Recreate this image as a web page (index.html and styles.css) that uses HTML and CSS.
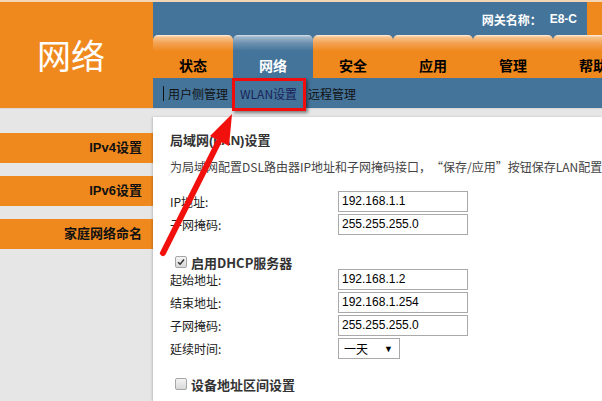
FILE: index.html
```html
<!DOCTYPE html>
<html lang="zh-CN">
<head>
<meta charset="utf-8">
<title>网络</title>
<link rel="stylesheet" href="styles.css">
</head>
<body>
<div class="page">
  <div class="topline"></div>
  <header class="header">
    <div class="logo">网络</div>
    <div class="navarea">
      <div class="gwbar">
        <span class="gw">网关名称：<b class="gwname">E8-C</b></span>
        <span class="gwcap"></span>
      </div>
      <nav class="tabs">
        <div class="tab">状态</div>
        <div class="tab active">网络</div>
        <div class="tab">安全</div>
        <div class="tab">应用</div>
        <div class="tab">管理</div>
        <div class="tab">帮助</div>
      </nav>
      <div class="subnav">
        <span class="sep"></span>
        <span class="sub">用户侧管理</span>
        <span class="sub current">WLAN设置</span>
        <span class="sub">远程管理</span>
      </div>
    </div>
  </header>
  <div class="body">
    <aside class="side">
      <div class="sideitem">IPv4设置</div>
      <div class="sideitem">IPv6设置</div>
      <div class="sideitem">家庭网络命名</div>
    </aside>
    <main class="panel">
      <div class="title">局域网(LAN)设置</div>
      <div class="desc">为局域网配置DSL路由器IP地址和子网掩码接口，<span class="q">“</span>保存/应用<span class="q">”</span>按钮保存LAN配置数据。</div>
      <div class="form first">
        <label class="lbl">IP地址:</label><div class="input">192.168.1.1</div>
        <label class="lbl">子网掩码:</label><div class="input">255.255.255.0</div>
      </div>
      <div class="check">
        <span class="box"><svg viewBox="0 0 12 12" width="12" height="12"><path d="M2.5 6.2 L5 8.6 L9.6 3" fill="none" stroke="#333" stroke-width="1.8"/></svg></span>
        <span class="checklbl">启用DHCP服务器</span>
      </div>
      <div class="form">
        <label class="lbl">起始地址:</label><div class="input">192.168.1.2</div>
        <label class="lbl">结束地址:</label><div class="input">192.168.1.254</div>
        <label class="lbl">子网掩码:</label><div class="input">255.255.255.0</div>
        <label class="lbl">延续时间:</label><div class="select"><span>一天</span><span class="caret">▼</span></div>
      </div>
      <div class="check second">
        <span class="box"></span>
        <span class="checklbl">设备地址区间设置</span>
      </div>
    </main>
  </div>
  <div class="redbox"></div>
  <svg class="arrow" viewBox="0 0 602 401" width="602" height="401">
    <line x1="163" y1="253" x2="219" y2="141" stroke="#f2100d" stroke-width="6" stroke-linecap="round"/>
    <polygon points="232,114 210,136 229,146" fill="#f2100d"/>
  </svg>
</div>
</body>
</html>
```
FILE: styles.css
```css
* { box-sizing: border-box; }
html, body { margin: 0; padding: 0; }
body {
  width: 602px;
  height: 401px;
  overflow: hidden;
  background: #e6e6e6;
  font-family: "Liberation Sans", "Noto Sans CJK SC", sans-serif;
  font-size: 12px;
  color: #111;
}
.page { position: relative; width: 602px; height: 401px; overflow: hidden; }
.topline { height: 2px; background: #f3d6b6; }
.header { display: flex; height: 106px; }
.logo {
  width: 153px;
  flex: none;
  background: #ef891e;
  color: #fff;
  font-family: "Noto Sans CJK SC", sans-serif;
  font-size: 34px;
  display: flex;
  align-items: center;
  justify-content: center;
  padding-right: 11px;
  padding-bottom: 2px;
}
.navarea { flex: 1; display: flex; flex-direction: column; background: #44749a; min-width: 0; }
.gwbar { height: 33px; display: flex; justify-content: flex-end; align-items: stretch; }
.gw {
  display: flex;
  align-items: center;
  color: #fff;
  font-weight: bold;
  font-size: 12px;
  font-family: "Noto Sans CJK SC", sans-serif;
  margin-right: 10px;
  padding-top: 1px;
}
.gwname { font-family: "Liberation Sans", sans-serif; font-size: 12px; margin-left: 8px; }
.gwcap { width: 15px; background: #ef891e; }
.tabs { height: 43px; display: flex; overflow: hidden; }
.tab {
  flex: none;
  width: 80px;
  border-radius: 5px 5px 0 0;
  background: linear-gradient(#fdf3ea 0, #f8c48e 2px, #f3a254 8px, #ef891e 16px, #ef891e 100%);
  text-align: center;
  font-family: "Noto Sans CJK SC", sans-serif;
  font-weight: bold;
  font-size: 14px;
  line-height: 20px;
  padding-top: 20px;
  color: #000;
}
.tab.active {
  background: linear-gradient(#d7e2ec 0, #9fb7cc 2px, #6d91b0 8px, #44749a 16px, #44749a 100%);
  color: #fff;
}
.subnav {
  height: 30px;
  display: flex;
  align-items: center;
  padding-left: 10px;
  font-family: "Noto Sans CJK SC", sans-serif;
  font-size: 12px;
  color: #111;
}
.sep { width: 1px; height: 15px; background: #111; margin-right: 4px; }
.sub { margin-right: 11px; }
.sub.current { color: #1a2358; margin-left: 1px; }
.body { display: flex; height: 293px; padding-top: 8px; background: #e6e6e6; border-top: 1px solid #d8d8d8; }
.side { width: 153px; flex: none; padding-top: 16px; }
.sideitem {
  height: 30px;
  margin-bottom: 13px;
  background: #ef891e;
  text-align: right;
  padding-right: 11px;
  line-height: 30px;
  font-weight: bold;
  font-size: 13px;
  font-family: "Liberation Sans", "Noto Sans CJK SC", sans-serif;
  color: #111;
}
.panel {
  flex: 1;
  min-width: 0;
  background: #fff;
  box-shadow: -1px 0 2px rgba(0,0,0,0.18);
  padding: 15px 0 0 17px;
  overflow: hidden;
  color: #222;
}
.title { font-weight: bold; font-size: 13px; line-height: 18px; color: #333; }
.desc {
  margin-top: 8px;
  line-height: 18px;
  white-space: nowrap;
  color: #444;
  font-family: "Noto Sans CJK SC", sans-serif;
}
.q { display: inline-block; width: 12px; text-align: center; }
.form {
  display: grid;
  grid-template-columns: 168px auto;
  row-gap: 2px;
  align-items: center;
  justify-items: start;
}
.form.first { margin-top: 15px; }
.lbl { font-family: "Noto Sans CJK SC", sans-serif; color: #222; }
.input {
  width: 130px;
  height: 21px;
  border: 1px solid #a9a9a9;
  padding-left: 3px;
  line-height: 19px;
  font-family: "Liberation Sans", sans-serif;
  font-size: 12px;
  color: #000;
}
.select {
  width: 62px;
  height: 21px;
  border: 1px solid #a9a9a9;
  display: flex;
  align-items: center;
  justify-content: space-between;
  padding: 0 6px 0 5px;
  color: #000;
}
.caret { font-size: 9px; }
.check { display: flex; align-items: center; height: 14px; margin-top: 20px; padding-left: 5px; }
.check.second { margin-top: 18px; }
.box {
  width: 12px;
  height: 12px;
  border: 1px solid #a5a5a5;
  border-radius: 2px;
  background: linear-gradient(#f4f4f4, #d9d9d9);
  display: flex;
  align-items: center;
  justify-content: center;
  margin-right: 4px;
}
.box svg { display: block; }
.checklbl { font-weight: bold; font-size: 13px; color: #333; font-family: "Noto Sans CJK SC", sans-serif; }
.redbox {
  position: absolute;
  left: 232px;
  top: 78px;
  width: 74px;
  height: 33px;
  border: 3px solid #f20c0c;
  box-shadow: 2px 2px 3px rgba(0,0,0,0.45);
}
.arrow { position: absolute; left: 0; top: 0; pointer-events: none; }
```
